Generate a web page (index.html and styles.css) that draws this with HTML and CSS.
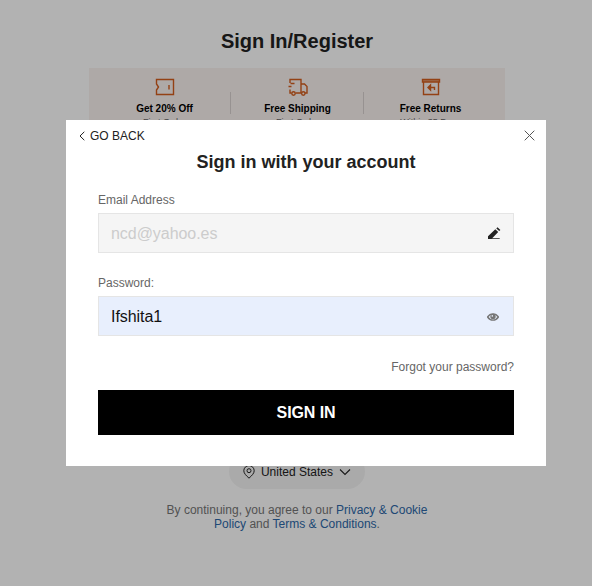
FILE: index.html
```html
<!DOCTYPE html>
<html lang="en">
<head>
<meta charset="utf-8">
<title>Sign In/Register</title>
<link rel="stylesheet" href="styles.css">
</head>
<body>
<main class="page">
  <h1 class="page-title">Sign In/Register</h1>
  <section class="benefits">
    <div class="benefit">
      <svg class="benefit-icon" viewBox="0 0 20 20"><path d="M1.500 2.500h17v15h-17v-4.500l2-3-2-3zM14 8v4.500"/></svg>
      <strong>Get 20% Off</strong><span>First Order</span>
    </div>
    <div class="benefit">
      <svg class="benefit-icon" viewBox="0 0 20 20"><path d="M2 6V2.500h11v13.500H7.500M3.500 16H2v-3.500M.500 9.500h3M2.500 6.500h4M13 7h3.500l2.500 2.500V16h-2M12 16h1.500"/><circle cx="5.500" cy="16.500" r="1.700"/><circle cx="15.300" cy="16.500" r="1.700"/></svg>
      <strong>Free Shipping</strong><span>First Order</span>
    </div>
    <div class="benefit">
      <svg class="benefit-icon" viewBox="0 0 20 20"><path class="lid" d="M1.500 2.500h17v2.500h-17z"/><path d="M2.500 5v12.500h15V5"/><path class="arrow" d="M13.500 13v-2.500H7.500M9.500 8L7 10.500 9.500 13z"/></svg>
      <strong>Free Returns</strong><span>Within 35 Days</span>
    </div>
  </section>
  <footer class="page-footer">
    <div class="country">
      <svg class="pin" viewBox="0 0 12 14"><path d="M6 13.200C3.500 10.800.8 8.500.8 5.800a5.200 5.200 0 0 1 10.400 0C11.200 8.500 8.500 10.800 6 13.200z"/><circle cx="6" cy="5.700" r="2"/></svg>
      <span>United States</span>
      <svg class="chevron" viewBox="0 0 12 8"><path d="M1 1.500l5 5 5-5"/></svg>
    </div>
    <p class="legal">By continuing, you agree to our <a>Privacy &amp; Cookie</a><br><a>Policy</a> and <a>Terms &amp; Conditions</a>.</p>
  </footer>
</main>
<div class="overlay">
  <form class="dialog">
    <header class="dialog-bar">
      <div class="back"><svg viewBox="0 0 6 10"><path d="M5.300.8L1 5l4.300 4.200"/></svg><span>GO BACK</span></div>
      <svg class="close" viewBox="0 0 11 11"><path d="M.7.7l9.600 9.600M10.300.7L.7 10.300"/></svg>
    </header>
    <h2 class="dialog-title">Sign in with your account</h2>
    <div class="label">Email Address</div>
    <div class="field field-locked"><span>ncd@yahoo.es</span>
      <svg class="edit" viewBox="0 0 14 14"><path d="M1 13V10.200L8.300 3.200l2.900 2.700L4.500 13zM9.300 2.400l1.200-1.200 2.900 2.700-1.200 1.200z"/><path d="M4 12.200h8.700v.8H1z"/></svg>
    </div>
    <div class="label label-password">Password:</div>
    <div class="field field-filled"><span>Ifshita1</span>
      <svg class="eye" viewBox="0 0 12 8"><path d="M.6 4C3.300-.2 8.700-.2 11.400 4 8.700 8.200 3.300 8.200.6 4z"/><circle cx="6" cy="3.500" r="2"/><circle class="glint" cx="5.300" cy="2.900" r=".8"/></svg>
    </div>
    <div class="forgot">Forgot your password?</div>
    <button class="submit" type="button">SIGN IN</button>
  </form>
</div>
</body>
</html>
```

FILE: styles.css
```css
* { box-sizing: border-box; }
body { margin: 0; width: 592px; height: 586px; overflow: hidden; font-family: "Liberation Sans", Arial, sans-serif; font-size: 12px; background: #fff; color: #666; }
svg { display: block; fill: none; stroke: currentColor; flex: none; }
.page { height: 586px; display: flex; flex-direction: column; align-items: center; padding-top: 28px; }
.page-title { margin: 0 0 0 2px; font-size: 20px; line-height: 26px; color: #222; }
.benefits { width: 416px; height: 68px; margin: 14px 0 0 2px; padding: 9px 8px 0 9px; display: flex; background: #faf2f0; }
.benefit { flex: 1; display: flex; flex-direction: column; align-items: center; position: relative; }
.benefit + .benefit::before { content: ""; position: absolute; left: -1px; top: 15px; width: 1px; height: 22px; background: #d9d2d0; }
.benefit-icon { width: 20px; height: 20px; color: #d35d1d; stroke-width: 1.4; }
.lid { fill: #e09a70; }
.arrow { fill: none; }
.benefit strong { font-size: 10px; line-height: 12px; margin-top: 6px; color: #000; }
.benefit span { font-size: 9px; line-height: 12px; margin-top: 1px; }
.page-footer { margin: 318px 0 0 2px; display: flex; flex-direction: column; align-items: center; }
.country { width: 136px; height: 35px; border-radius: 18px; background: #f4f4f4; display: flex; align-items: center; justify-content: center; gap: 6px; color: #222; }
.pin { width: 12px; height: 14px; }
.chevron { width: 12px; height: 8px; stroke-width: 1.1; }
.legal { margin: 14px 0 0; line-height: 14px; text-align: center; color: #767676; }
.legal a { color: #2d68a8; }
.overlay { position: absolute; inset: 0; background: rgba(0, 0, 0, 0.302); }
.dialog { width: 480px; height: 346.400px; margin: 119.800px 0 0 66px; padding: 0.200px 32px 0; background: #fff; }
.dialog-bar { margin: 0 -20px; height: 31px; padding: 1px 0 0 1px; display: flex; align-items: center; justify-content: space-between; color: #222; }
.back { display: flex; align-items: center; gap: 5px; }
.back svg { width: 6px; height: 10px; }
.close { width: 11px; height: 11px; margin-right: -1px; stroke-width: 1; color: #555; }
.dialog-title { margin: 0; font-size: 18px; line-height: 22px; text-align: center; color: #222; }
.label { margin-top: 20px; height: 20px; line-height: 14px; }
.label-password { margin-top: 23px; height: 20px; }
.field { height: 40px; border: 1px solid #e5e5e5; display: flex; align-items: center; justify-content: space-between; padding: 1px 12px 0; font-size: 16px; letter-spacing: -0.05px; }
.field span { padding-top: 1px; }
.field-locked { background: #f5f5f5; color: #ccc; }
.field-filled { background: #e8effd; color: #111; }
.edit { width: 14px; height: 14px; color: #222; fill: currentColor; stroke: none; }
.eye { width: 12px; height: 8px; margin: 1px 2px 0 0; stroke-width: 1.4; color: #767676; }
.eye circle { fill: currentColor; }
.eye .glint { fill: #e8effd; stroke: none; }
.forgot { margin-top: 24px; height: 30px; line-height: 14px; text-align: right; }
.submit { display: block; width: 100%; height: 45px; padding: 2px 0 0; border: 0; background: #000; color: #fff; font: bold 16px "Liberation Sans", Arial, sans-serif; letter-spacing: -0.1px; }
```
